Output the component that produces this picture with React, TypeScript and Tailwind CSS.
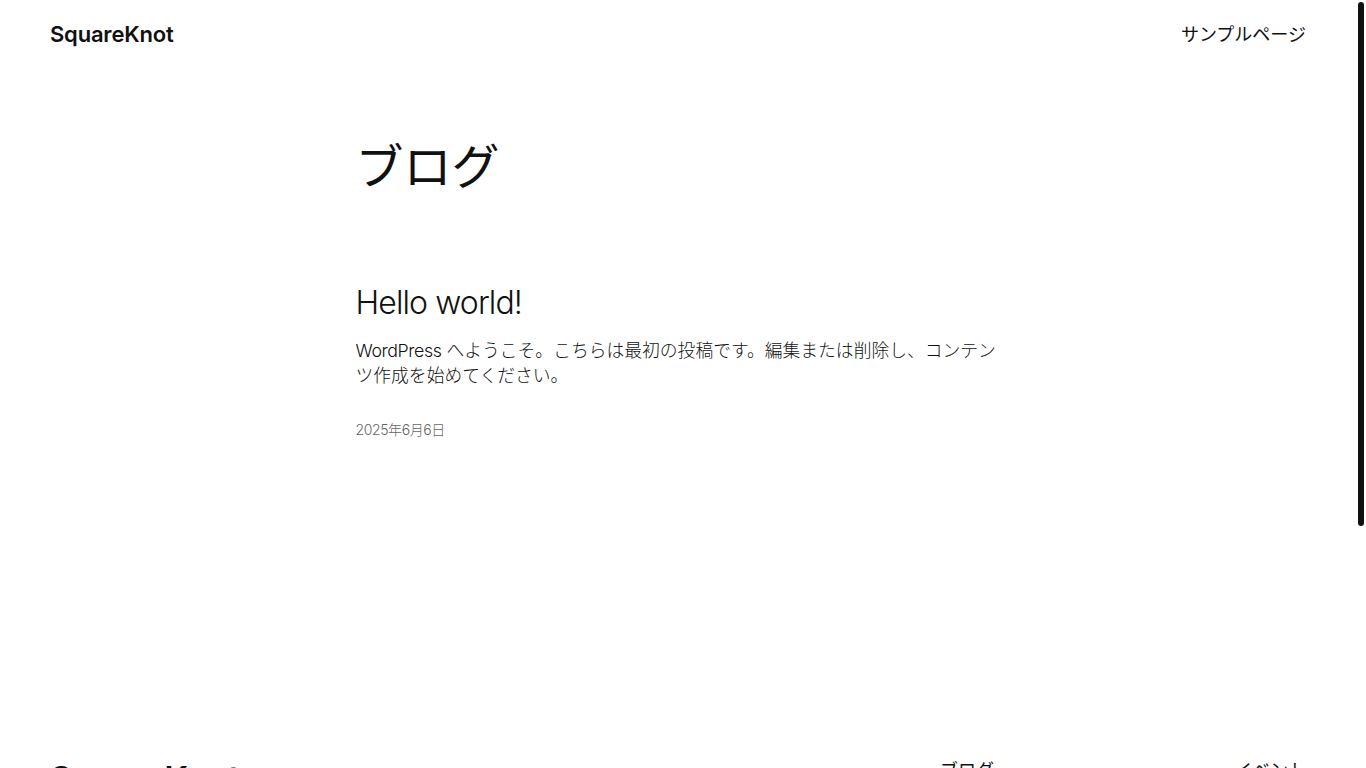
const sans = "font-['Inter','Noto_Sans_CJK_JP',sans-serif]"

const footerLeft = ['ブログ', '概要', 'FAQ', '作者']
const footerRight = ['イベント', 'ショップ', 'パターン', 'テーマ']

export default function App() {
  return (
    <div className={`flex h-screen overflow-hidden bg-white text-[#111111] ${sans}`}>
      <div className="min-w-0 flex-1">
        <header className="flex h-[70px] items-center justify-between px-[50px]">
          <a className="text-[22px] font-semibold leading-tight tracking-[-0.2px]">SquareKnot</a>
          <nav>
            <a className="text-[18px] leading-tight">サンプルページ</a>
          </nav>
        </header>

        <main className="mx-auto w-[645px] pt-[68px]">
          <h1 className="text-[48px] font-normal leading-[1.2]">ブログ</h1>

          <article className="mt-[86px]">
            <h2 className="text-[32px] font-light leading-[1.3] tracking-[-0.9px]">Hello world!</h2>
            <p className="mt-[15px] text-[17.8px] font-light leading-[25px]">
              <span className="tracking-[-0.4px]">WordPress</span> へようこそ。こちらは最初の投稿です。編集または削除し、コンテンツ作成を始めてください。
            </p>
            <div className="mt-[31px] text-[14px] font-light leading-[21px] tracking-[-0.4px] text-[#666666]">2025年6月6日</div>
          </article>
        </main>

        <footer className="mt-[320px] px-[50px] pb-[40px]">
          <div className="flex justify-between">
            <div className="pt-[2px] text-[34px] font-semibold leading-none tracking-[-0.4px]">SquareKnot</div>
            <div className="flex gap-[240px]">
              <ul className="flex flex-col gap-[10px] text-[18px] leading-tight">
                {footerLeft.map((t) => (
                  <li key={t}>{t}</li>
                ))}
              </ul>
              <ul className="flex flex-col gap-[10px] text-[18px] leading-tight">
                {footerRight.map((t) => (
                  <li key={t}>{t}</li>
                ))}
              </ul>
            </div>
          </div>
          <div className="mt-[120px] text-[15px] text-[#666666]">Designed with WordPress</div>
        </footer>
      </div>

      <div className="w-[10px] shrink-0">
        <div className="mx-[2px] mt-[2px] h-[524px] rounded-full bg-[#111111]" />
      </div>
    </div>
  )
}
